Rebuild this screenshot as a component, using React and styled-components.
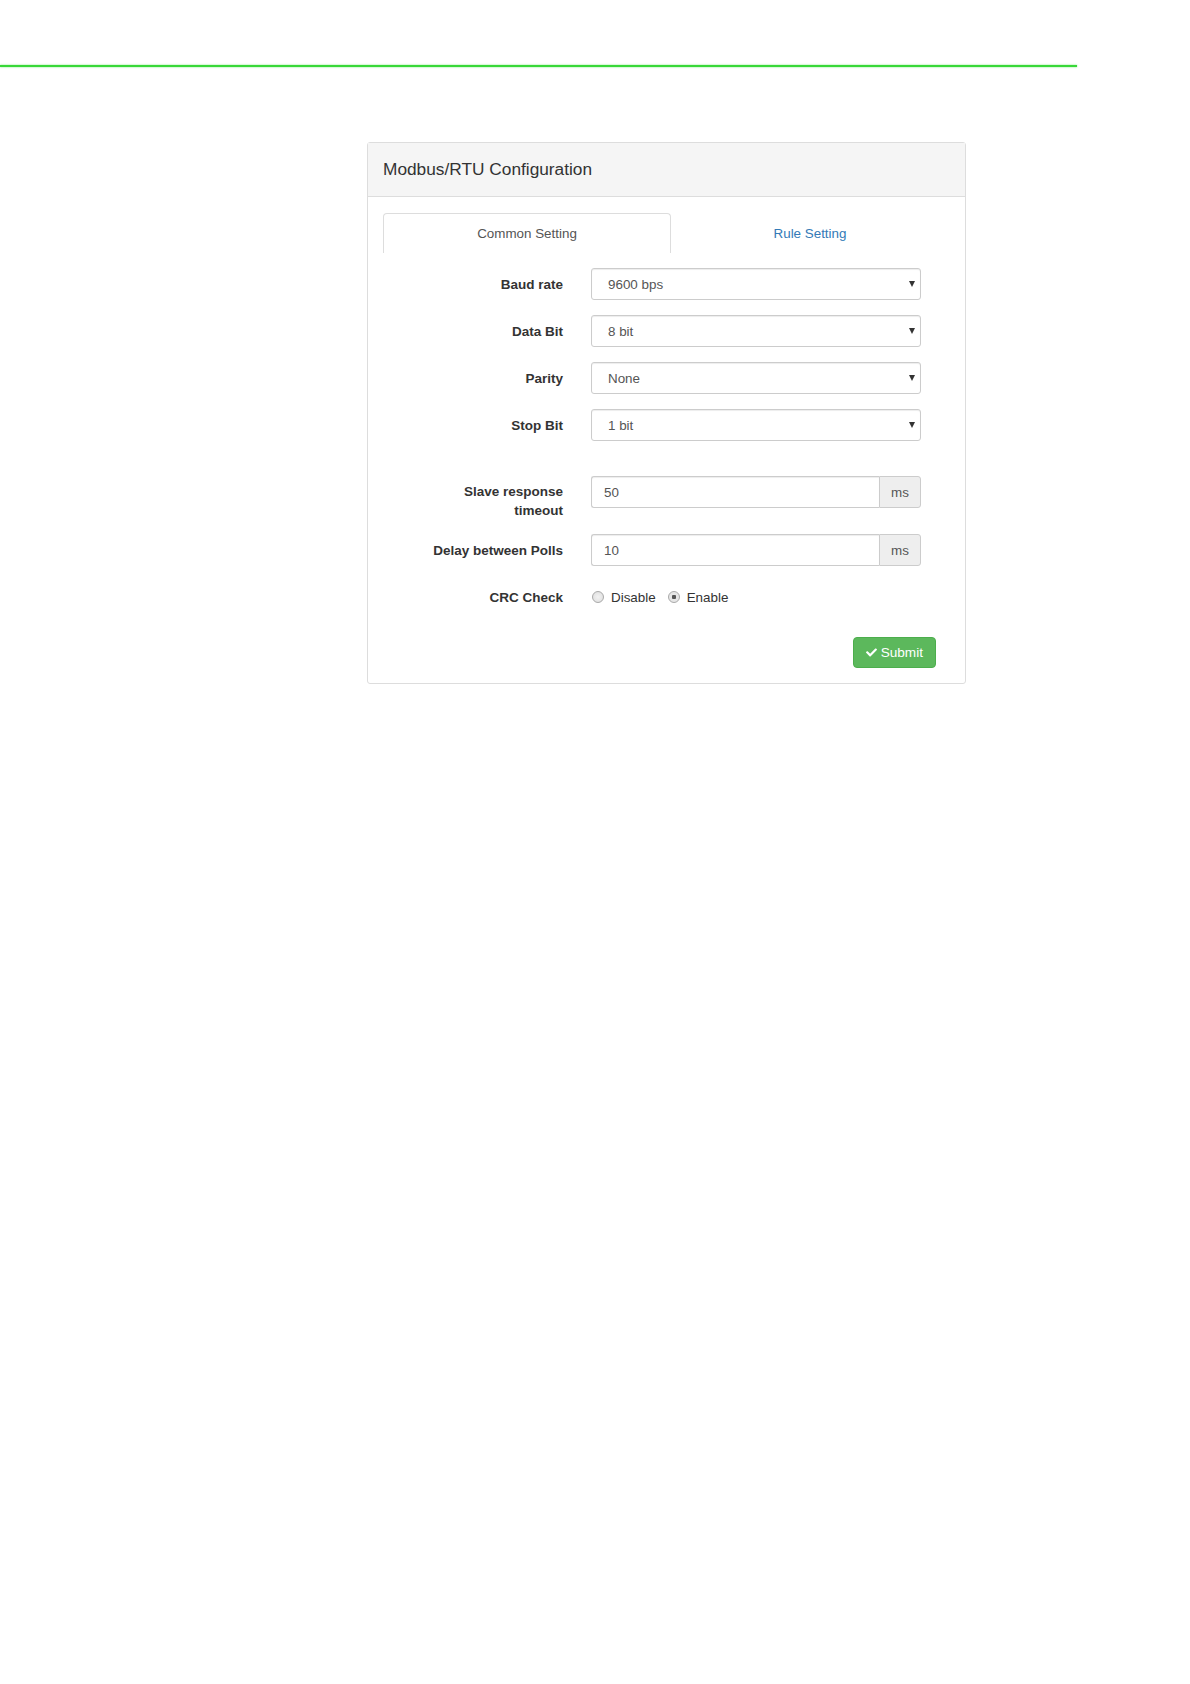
import React from 'react';
import styled, { createGlobalStyle } from 'styled-components';
import { FaCheck } from 'react-icons/fa';

const GlobalStyle = createGlobalStyle`
  body {
    margin: 0;
    background: #fff;
    font-family: "Liberation Sans", Arial, sans-serif;
  }
`;

const TopRule = styled.div`
  width: 1077px;
  height: 2px;
  margin-top: 65px;
  background: #38d838;
  box-shadow: 0 0 2px rgba(56, 216, 56, 0.7);
`;

const Panel = styled.div`
  width: 597px;
  margin: 75px 0 0 367px;
  border: 1px solid #dddddd;
  border-radius: 3px;
  background: #fff;
`;

const PanelHeading = styled.div`
  height: 53px;
  display: flex;
  align-items: center;
  padding: 0 15px;
  background: #f5f5f5;
  border-bottom: 1px solid #dddddd;
  font-size: 17.3px;
  color: #333;
`;

const PanelBody = styled.div`
  padding: 16px 16px 15px 15px;
`;

const Tabs = styled.div`
  display: grid;
  grid-template-columns: 288px 1fr;
  border-bottom: 1px solid #dddddd;
`;

const Tab = styled.div`
  height: 40px;
  box-sizing: border-box;
  display: flex;
  align-items: center;
  justify-content: center;
  font-size: 13.4px;
  color: ${p => (p.active ? '#555' : '#337ab7')};
  background: #fff;
  border: 1px solid ${p => (p.active ? '#dddddd' : 'transparent')};
  border-bottom: none;
  border-radius: 4px 4px 0 0;
  margin-bottom: -1px;
`;

const FormRow = styled.div`
  display: grid;
  grid-template-columns: 180px 330px;
  column-gap: 28px;
  align-items: ${p => (p.top ? 'start' : 'center')};
  margin-top: ${p => p.gap}px;
`;

const Label = styled.div`
  text-align: right;
  font-size: 13.5px;
  font-weight: bold;
  color: #333;
  line-height: 19px;
  padding-top: ${p => (p.top ? '6px' : '0')};
`;

const SelectWrap = styled.div`
  position: relative;
  height: 32px;
`;

const Select = styled.select`
  appearance: none;
  width: 100%;
  height: 32px;
  padding: 0 24px 0 16px;
  border: 1px solid #cccccc;
  border-radius: 3px;
  background: #fff;
  box-shadow: inset 0 1px 1px rgba(0, 0, 0, 0.075);
  font-family: "Liberation Sans", Arial, sans-serif;
  font-size: 13.4px;
  color: #555;
  outline: none;
`;

const Caret = styled.span`
  position: absolute;
  right: 6px;
  top: 13px;
  width: 0;
  height: 0;
  border-left: 3px solid transparent;
  border-right: 3px solid transparent;
  border-top: 6px solid #333;
  pointer-events: none;
`;

const InputGroup = styled.div`
  display: flex;
  height: 32px;
`;

const TextInput = styled.input`
  flex: 1;
  min-width: 0;
  height: 32px;
  box-sizing: border-box;
  padding: 0 12px;
  border: 1px solid #cccccc;
  border-right: none;
  border-radius: 3px 0 0 3px;
  box-shadow: inset 0 1px 1px rgba(0, 0, 0, 0.075);
  font-family: "Liberation Sans", Arial, sans-serif;
  font-size: 13.4px;
  color: #555;
  outline: none;
`;

const Addon = styled.span`
  width: 42px;
  box-sizing: border-box;
  display: flex;
  align-items: center;
  justify-content: center;
  background: #eeeeee;
  border: 1px solid #cccccc;
  border-radius: 0 3px 3px 0;
  font-size: 13.4px;
  color: #555;
`;

const RadioSet = styled.div`
  display: flex;
  align-items: center;
  height: 20px;
  font-size: 13.4px;
  color: #333;
`;

const RadioOption = styled.label`
  display: flex;
  align-items: center;
  gap: 7px;
  margin-right: 11px;
  padding-left: 1px;
`;

const RadioDot = styled.span`
  width: 12px;
  height: 12px;
  box-sizing: border-box;
  border-radius: 50%;
  border: 1px solid #a9a9a9;
  background: radial-gradient(circle, ${p => (p.checked ? '#555 0 2px, #e6e6e6 2.5px' : '#f2f2f2 0, #dcdcdc 100%')});
`;

const Actions = styled.div`
  display: flex;
  justify-content: flex-end;
  margin-top: 30px;
  padding-right: 13px;
`;

const SubmitButton = styled.button`
  display: flex;
  align-items: center;
  gap: 4px;
  height: 31px;
  padding: 0 12px;
  background: #5cb85c;
  border: 1px solid #4cae4c;
  border-radius: 4px;
  color: #fff;
  font-family: "Liberation Sans", Arial, sans-serif;
  font-size: 13.6px;
  cursor: pointer;
`;

const selects = [
  { label: 'Baud rate', value: '9600 bps', gap: 15 },
  { label: 'Data Bit', value: '8 bit', gap: 15 },
  { label: 'Parity', value: 'None', gap: 15 },
  { label: 'Stop Bit', value: '1 bit', gap: 15 }
];

export default function App() {
  return (
    <>
      <GlobalStyle />
      <TopRule />
      <Panel>
        <PanelHeading>Modbus/RTU Configuration</PanelHeading>
        <PanelBody>
          <Tabs>
            <Tab active>Common Setting</Tab>
            <Tab>Rule Setting</Tab>
          </Tabs>

          {selects.map(s => (
            <FormRow key={s.label} gap={s.gap}>
              <Label>{s.label}</Label>
              <SelectWrap>
                <Select defaultValue={s.value}>
                  <option>{s.value}</option>
                </Select>
                <Caret />
              </SelectWrap>
            </FormRow>
          ))}

          <FormRow gap={35} top>
            <Label top>Slave response<br />timeout</Label>
            <InputGroup>
              <TextInput defaultValue="50" />
              <Addon>ms</Addon>
            </InputGroup>
          </FormRow>

          <FormRow gap={14}>
            <Label>Delay between Polls</Label>
            <InputGroup>
              <TextInput defaultValue="10" />
              <Addon>ms</Addon>
            </InputGroup>
          </FormRow>

          <FormRow gap={21}>
            <Label>CRC Check</Label>
            <RadioSet>
              <RadioOption><RadioDot />Disable</RadioOption>
              <RadioOption><RadioDot checked />Enable</RadioOption>
            </RadioSet>
          </FormRow>

          <Actions>
            <SubmitButton type="button"><FaCheck size={11} />Submit</SubmitButton>
          </Actions>
        </PanelBody>
      </Panel>
    </>
  );
}
